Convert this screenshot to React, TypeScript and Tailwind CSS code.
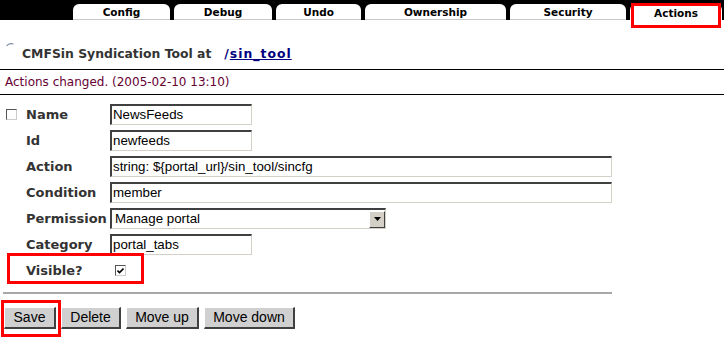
import React from 'react';

const tabs = [
  { label: 'Config', w: 'w-[97px]' },
  { label: 'Debug', w: 'w-[98px]' },
  { label: 'Undo', w: 'w-[85px]' },
  { label: 'Ownership', w: 'w-[141px]' },
  { label: 'Security', w: 'w-[116px]' },
];

function TextBox({ value, width }: { value: string; width: string }) {
  return (
    <div
      className={`${width} flex h-[21px] items-center border-t-2 border-r border-b border-l-2 border-t-[#404040] border-r-[#d4d0c8] border-b-[#d4d0c8] border-l-[#404040] bg-white pl-[1px] font-['Liberation_Sans',Arial,sans-serif] text-[13.3px] text-black`}
    >
      {value}
    </div>
  );
}

function Check({ checked }: { checked?: boolean }) {
  return (
    <span className="flex h-[11px] w-[11px] items-center justify-center border-t border-l border-t-[#555] border-l-[#555] border-r border-b border-r-[#ccc] border-b-[#ccc] bg-white">
      {checked && (
        <svg width="7" height="7" viewBox="0 0 7 7">
          <path d="M0.5 3.5 L2.5 5.5 L6.5 1.5" stroke="#000" strokeWidth="1.6" fill="none" />
        </svg>
      )}
    </span>
  );
}

function Button({ label, width }: { label: string; width: string }) {
  return (
    <div
      className={`${width} flex h-[22px] items-center justify-center border-t border-l border-t-white border-l-white border-r-2 border-b-2 border-r-[#404040] border-b-[#404040] bg-[#d0d0d0] font-['Liberation_Sans',Arial,sans-serif] text-[14px] text-black`}
    >
      {label}
    </div>
  );
}

const labelCls = "font-['DejaVu_Sans',Verdana,sans-serif] text-[13px] font-bold text-[#333]";

export default function App() {
  return (
    <div className="relative h-[342px] w-[724px] overflow-hidden bg-white">
      {/* tab bar */}
      <div className="flex h-[20px] items-end gap-[4px] bg-black pl-[73px]">
        {tabs.map((t) => (
          <div
            key={t.label}
            className={`${t.w} flex h-[16px] items-center justify-center rounded-t-[6px] border-b border-[#c8c8c8] bg-white pt-[2px] font-['DejaVu_Sans',Verdana,sans-serif] text-[10.5px] leading-none font-bold text-black`}
          >
            {t.label}
          </div>
        ))}
        <div className="flex h-[16px] w-[92px] items-center justify-center rounded-t-[6px] bg-white pt-[2px] font-['DejaVu_Sans',Verdana,sans-serif] text-[10.5px] leading-none font-bold text-black">
          Actions
        </div>
      </div>

      {/* title */}
      <div className="flex h-[49px] items-start pt-[25px] pl-[6px]">
        <svg width="8" height="6" viewBox="0 0 8 6" className="mt-[-3px]">
          <path d="M0.5 4 Q3 0.5 7.5 2" stroke="#7b8aa8" strokeWidth="1.2" fill="none" />
        </svg>
        <div className="ml-[8px] font-['DejaVu_Sans',Verdana,sans-serif] text-[12.4px] leading-[18px] font-bold whitespace-pre text-[#333]">
          CMFSin Syndication Tool at{'   '}
          <span className="tracking-[1px] text-[#000080]">
            /<span className="underline">sin_tool</span>
          </span>
        </div>
      </div>

      {/* status message */}
      <div className="border-y border-black pl-[5px] font-['DejaVu_Sans',Verdana,sans-serif] text-[12px] leading-[24px] text-[#660033]">
        Actions changed. (2005-02-10 13:10)
      </div>

      {/* form */}
      <div className="grid grid-cols-[110px_auto] gap-y-[5px] pt-[9px]">
        <div className="flex h-[21px] items-center pl-[6px]">
          <Check />
          <span className={`${labelCls} ml-[9px]`}>Name</span>
        </div>
        <TextBox value="NewsFeeds" width="w-[142px]" />

        <div className={`${labelCls} flex h-[21px] items-center pl-[26px]`}>Id</div>
        <TextBox value="newfeeds" width="w-[142px]" />

        <div className={`${labelCls} flex h-[21px] items-center pl-[26px]`}>Action</div>
        <TextBox value="string: ${portal_url}/sin_tool/sincfg" width="w-[502px]" />

        <div className={`${labelCls} flex h-[21px] items-center pl-[26px]`}>Condition</div>
        <TextBox value="member" width="w-[502px]" />

        <div className={`${labelCls} flex h-[21px] items-center pl-[26px]`}>Permission</div>
        <div className="flex h-[21px] w-[276px] items-center border-t-2 border-r border-b border-l-2 border-t-[#404040] border-r-[#d4d0c8] border-b-[#d4d0c8] border-l-[#404040] bg-white">
          <span className="flex-1 pl-[3px] font-['Liberation_Sans',Arial,sans-serif] text-[13.3px] text-black">
            Manage portal
          </span>
          <span className="flex h-[17px] w-[16px] items-center justify-center border-t border-l border-t-white border-l-white border-r border-b border-r-[#404040] border-b-[#404040] bg-[#d4d0c8]">
            <svg width="7" height="4" viewBox="0 0 7 4">
              <path d="M0 0 H7 L3.5 4 Z" fill="#000" />
            </svg>
          </span>
        </div>

        <div className={`${labelCls} flex h-[21px] items-center pl-[26px]`}>Category</div>
        <TextBox value="portal_tabs" width="w-[142px]" />

        <div className={`${labelCls} flex h-[21px] items-center pl-[26px]`}>Visible?</div>
        <div className="flex h-[21px] items-center pl-[5px]">
          <Check checked />
        </div>
      </div>

      <div className="mt-[11px] ml-[3px] w-[609px] border-t-2 border-[#a8a8a8]" />

      <div className="mt-[13px] flex gap-[5px] pl-[4px]">
        <Button label="Save" width="w-[52px]" />
        <Button label="Delete" width="w-[60px]" />
        <Button label="Move up" width="w-[73px]" />
        <Button label="Move down" width="w-[91px]" />
      </div>

      {/* red annotation boxes */}
      <div className="absolute top-[3px] left-[631px] h-[25px] w-[90px] border-[3px] border-[#ff0000]" />
      <div className="absolute top-[253px] left-[7px] h-[31px] w-[137px] border-[3px] border-[#ff0000]" />
      <div className="absolute top-[300px] left-[1px] h-[37px] w-[60px] border-[3px] border-[#ff0000]" />
    </div>
  );
}
